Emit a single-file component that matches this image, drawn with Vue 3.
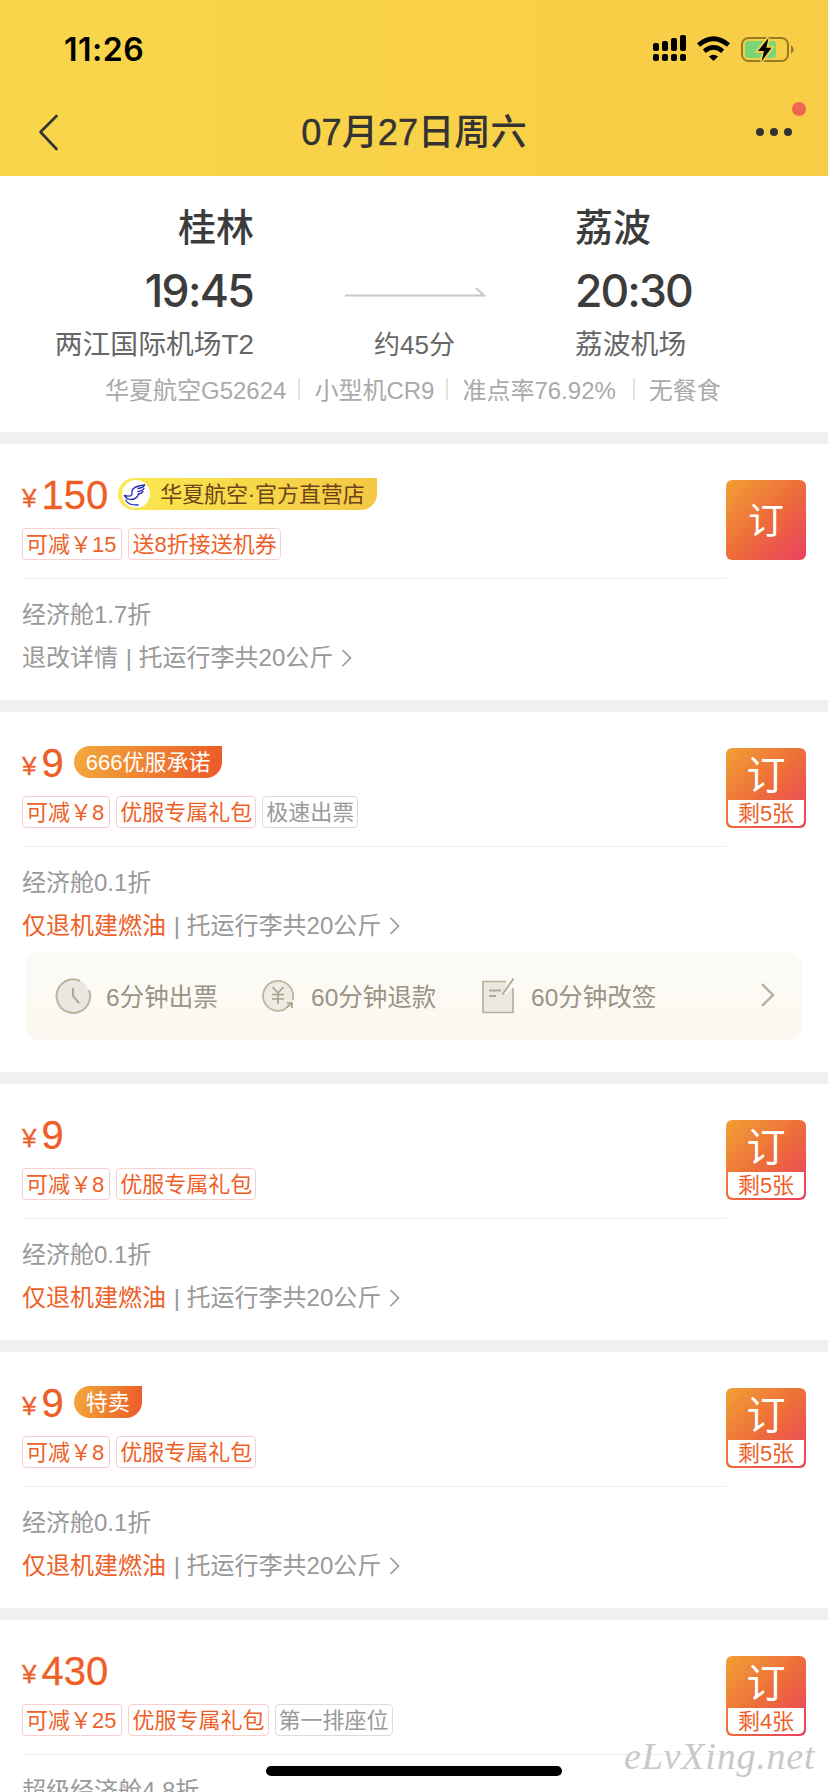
<script setup>
const offers = [
  {
    price: '150', store: '华夏航空·官方直营店',
    tags: [{ t: '可减￥15', cut: true }, { t: '送8折接送机券' }],
    cabin: '经济舱1.7折', rule: '退改详情', left: '',
  },
  {
    price: '9', badge: '666优服承诺',
    tags: [{ t: '可减￥8', cut: true }, { t: '优服专属礼包' }, { t: '极速出票', gray: true }],
    cabin: '经济舱0.1折', rule: '仅退机建燃油', hot: true, left: '剩5张', service: true,
  },
  {
    price: '9',
    tags: [{ t: '可减￥8', cut: true }, { t: '优服专属礼包' }],
    cabin: '经济舱0.1折', rule: '仅退机建燃油', hot: true, left: '剩5张',
  },
  {
    price: '9', badge: '特卖',
    tags: [{ t: '可减￥8', cut: true }, { t: '优服专属礼包' }],
    cabin: '经济舱0.1折', rule: '仅退机建燃油', hot: true, left: '剩5张',
  },
  {
    price: '430',
    tags: [{ t: '可减￥25', cut: true }, { t: '优服专属礼包' }, { t: '第一排座位', gray: true }],
    cabin: '超级经济舱4.8折', rule: '退改详情', left: '剩4张',
  },
]
const info = ['华夏航空G52624', '小型机CR9', '准点率76.92%', '无餐食']
</script>

<template>
  <div class="screen">
    <header class="top">
      <div class="status">
        <span class="clock">11:26</span>
        <svg class="sys" width="144" height="32" viewBox="0 0 144 32">
          <g fill="#000">
            <rect x="3" y="11" width="6" height="8" rx="2" />
            <rect x="12" y="9" width="6" height="10" rx="2" />
            <rect x="21" y="6" width="6" height="13" rx="2" />
            <rect x="30" y="3" width="6" height="16" rx="2" />
            <rect x="3" y="22" width="6" height="7" rx="2" />
            <rect x="12" y="22" width="6" height="7" rx="2" />
            <rect x="21" y="22" width="6" height="7" rx="2" />
            <rect x="30" y="22" width="6" height="7" rx="2" />
            <path d="M63.500 29L58.900 24.600Q63.500 20.800 68.100 24.600Z" />
          </g>
          <g fill="none" stroke="#000" stroke-width="4.600">
            <path d="M48.500 13Q63.500 0.500 78.500 13" />
            <path d="M54.300 19.200Q63.500 11.500 72.700 19.200" />
          </g>
          <rect x="92" y="6" width="46" height="23" rx="6.500" fill="none" stroke="#967a25" stroke-width="2" />
          <path d="M141 13Q146.500 17.500 141 22Z" fill="#967a25" />
          <rect x="95" y="9" width="31" height="17" rx="3" fill="#77d777" />
          <path d="M118.500 6L108 19H114L111.500 29.500L121.500 15.800H116.300Z" fill="#000" stroke="#f8cf48" stroke-width="3.600" paint-order="stroke" />
        </svg>
      </div>
      <nav class="nav">
        <svg class="back" width="24" height="40" viewBox="0 0 24 40">
          <path d="M20.500 4L4.500 20L20.500 37" fill="none" stroke="#333" stroke-width="2.600" stroke-linecap="round" stroke-linejoin="round" />
        </svg>
        <h1><i>07</i>月<i>27</i>日周六</h1>
        <svg class="more" width="56" height="40" viewBox="0 0 56 40">
          <g fill="#333"><circle cx="10" cy="32" r="4" /><circle cx="24" cy="32" r="4" /><circle cx="38" cy="32" r="4" /></g>
          <circle cx="49" cy="9" r="7" fill="#ec6650" />
        </svg>
      </nav>
    </header>

    <section class="flight">
      <div class="route">
        <div class="from">
          <div class="city">桂林</div>
          <div class="time">19:45</div>
          <div class="port">两江国际机场T2</div>
        </div>
        <div class="mid">
          <svg width="142" height="14" viewBox="0 0 142 14">
            <path d="M1 10.500H140L132 3" fill="none" stroke="#c8c8c8" stroke-width="2" />
          </svg>
          <div class="port">约45分</div>
        </div>
        <div class="to">
          <div class="city">荔波</div>
          <div class="time">20:30</div>
          <div class="port">荔波机场</div>
        </div>
      </div>
      <div class="info"><span v-for="i in info" :key="i">{{ i }}</span></div>
    </section>

    <section v-for="(o, n) in offers" :key="n" class="offer">
      <div class="head">
        <div class="deal">
          <div class="line">
            <span class="yen">¥</span><span class="price">{{ o.price }}</span>
            <span v-if="o.store" class="badge store">
              <svg width="28" height="28" viewBox="0 0 28 28">
                <circle cx="14" cy="14" r="14" fill="#fff" />
                <g fill="none" stroke="#2529b4" stroke-width="1.300" stroke-linecap="round" stroke-linejoin="round">
                  <path d="M22.500 5Q13.500 6 11 9Q9.500 11 10 14.500Q9 17 2.500 15.500" />
                  <path d="M2.500 15.500Q4.500 19.500 9.500 19.500Q15 19 16.500 14" />
                  <path d="M22.500 5Q22 7.500 16 8.500M22 8.500Q21 10.500 16 11.500M21 11.500Q19.500 13.500 16.500 14M4 20Q4.500 25 16 25" />
                </g>
              </svg><span>{{ o.store }}</span>
            </span>
            <span v-if="o.badge" class="badge">{{ o.badge }}</span>
          </div>
          <div class="tags">
            <span v-for="t in o.tags" :key="t.t" class="tag" :class="{ gray: t.gray, cut: t.cut }">{{ t.t }}</span>
          </div>
        </div>
        <button class="book" :class="{ few: o.left }">
          <b>订</b><small v-if="o.left">{{ o.left }}</small>
        </button>
      </div>
      <p class="cabin">{{ o.cabin }}</p>
      <p class="rules">
        <span :class="{ hot: o.hot }">{{ o.rule }}</span><span class="bag">&nbsp;|&nbsp;托运行李共20公斤</span>
        <svg width="12" height="20" viewBox="0 0 12 20"><path d="M1.500 2L9.500 10L1.500 18" fill="none" stroke="#999" stroke-width="1.700" /></svg>
      </p>
      <div v-if="o.service" class="service">
        <span>
          <svg width="38" height="38" viewBox="0 0 38 38">
            <circle cx="19" cy="19" r="16.500" fill="#e9e7df" />
            <path d="M26 4Q20 1 13 3.500A16.800 16.800 0 1 0 35 13" fill="none" stroke="#bbb5a1" stroke-width="2" />
            <path d="M19 11V19L25 26" fill="none" stroke="#aaa596" stroke-width="2" />
          </svg>6分钟出票
        </span>
        <span>
          <svg width="38" height="38" viewBox="0 0 38 38">
            <circle cx="19" cy="19" r="15" fill="#eeebe2" />
            <path d="M27 31.500A15 15 0 1 1 34 19V23" fill="none" stroke="#bbb5a1" stroke-width="1.800" />
            <path d="M13.500 10L19 16L24.500 10M19 16V27M13 17.500H25M13 22H25M27 31L33 26M28 26H33V31" fill="none" stroke="#aaa08c" stroke-width="1.700" />
          </svg>60分钟退款
        </span>
        <span>
          <svg width="38" height="38" viewBox="0 0 38 38">
            <path d="M4 5H28L24 17H27L34 11V35H4Z" fill="#ebe8df" />
            <path d="M27 4.500H4V35.500H34V11" fill="none" stroke="#b9b09b" stroke-width="1.700" />
            <path d="M34.500 1.500L23.500 17.500M10 13.500H22M10 19H17" fill="none" stroke="#b3a892" stroke-width="1.900" />
          </svg>60分钟改签
        </span>
        <svg class="go" width="16" height="28" viewBox="0 0 16 28"><path d="M2 3L13 14L2 25" fill="none" stroke="#b4aea0" stroke-width="2.400" /></svg>
      </div>
    </section>

    <div class="home"></div>
    <div class="mark">eLvXing.net</div>
  </div>
</template>

<style>
body { margin: 0; background: #fff; }
</style>

<style scoped>
.screen {
  position: relative; width: 828px; height: 1792px; overflow: hidden; background: #f0f0f0;
  font-family: "Liberation Sans", "Noto Sans CJK SC", sans-serif; color: #999;
}
.top { height: 176px; background: linear-gradient(90deg, #f8d64b, #f8cd46); }
.status { height: 88px; display: flex; justify-content: space-between; padding: 0 34px 0 64px; }
.clock { font: 600 32px/40px Inter, sans-serif; color: #000; margin-top: 30px; letter-spacing: .5px; }
.sys { margin-top: 32px; }
.nav { height: 88px; display: grid; grid-template-columns: 78px 1fr 78px; }
.back { margin: 24px 0 0 36px; }
.more { margin: 12px 0 0; }
h1 { margin: 22px 0 0; text-align: center; font-size: 36.2px; line-height: 45px; font-weight: 500; color: #333; }
h1 i { font-style: normal; -webkit-text-stroke: .4px #333; }
.flight { height: 256px; background: #fff; box-sizing: border-box; padding-top: 28px; }
.route { display: grid; grid-template-columns: 254px 321px 1fr; }
.from { text-align: right; }
.mid { text-align: center; padding-top: 81px; }
.mid svg { display: block; margin: 0 auto 28px; }
.city { font-size: 38px; line-height: 49px; height: 48px; font-weight: 500; color: #3c3c3c; }
.time { font: 500 44.5px/52px Inter, sans-serif; color: #3c3c3c; margin-top: 13px; letter-spacing: -1.900px; }
.from .time { padding-right: 1px; letter-spacing: -1.700px; }
.port { font-size: 27.800px; line-height: 36px; color: #666; margin-top: 10px; }
.mid .port { margin-top: 0; font-size: 26px; }
.info { display: flex; padding-left: 105px; height: 32px; margin-top: 12px; font-size: 24px; line-height: 32px; color: #aaa; }
.info span { display: flex; align-items: center; }
.info span + span::before { content: ""; width: 2px; height: 22px; background: #e2e2e2; margin: -4px 14px 0 12px; }
.info span:last-child::before { margin-left: 17px; }
.offer { background: #fff; margin-top: 12px; padding: 34px 22px 26px; }
.head { display: flex; justify-content: space-between; height: 101px; }
.deal { flex: 1; border-bottom: 1px solid #eee; }
.line { display: flex; height: 32px; color: #ee5f28; }
.yen { width: 19.5px; font-size: 26px; line-height: 40px; -webkit-text-stroke: .3px #ee5f28; }
.price { font-size: 40px; line-height: 34px; -webkit-text-stroke: .3px #ee5f28; }
.badge {
  margin-left: 10px; height: 32px; box-sizing: border-box; padding: 0 12px; font-size: 22px; line-height: 33px; color: #fff;
  border-radius: 16px 0 16px 16px; background: linear-gradient(100deg, #f2a93c, #ec5a28);
}
.store { display: flex; align-items: center; padding: 0 12px 0 4px; color: #6b431b; background: linear-gradient(100deg, #fbe94f, #f5c744); }
.store svg { margin-right: 10px; }
.store span { letter-spacing: -.1px; }
.tags { display: flex; gap: 6px; margin-top: 18px; }
.tag { height: 32px; box-sizing: border-box; border: 1px solid #f8cfcf; border-radius: 4px; padding: 0 3px; font-size: 22px; line-height: 31px; color: #ee5f28; }
.tag.cut { padding: 0 5px 0 3px; }
.tag.gray { color: #999; border-color: #dcdcdc; }
.book { width: 80px; height: 80px; margin: 2px 0 0; padding: 0; border: 0; border-radius: 6px; background: linear-gradient(135deg, #f2a035, #ed6d3a 50%, #eb3f60); font-family: inherit; color: #fff; display: flex; flex-direction: column; align-items: center; justify-content: center; }
.book b { font-weight: 400; font-size: 36px; height: 80px; line-height: 83px; }
.few { justify-content: flex-start; }
.few b { font-size: 39px; line-height: 55px; height: 52px; }
.book small { width: 76px; height: 26px; background: #fff; border-radius: 0 0 5px 5px; color: #ee5f28; font-size: 22px; line-height: 27px; }
.cabin, .rules { margin: 0; font-size: 24px; line-height: 32px; }
.cabin { margin-top: 20px; }
.rules { display: flex; align-items: center; margin-top: 11px; white-space: pre; }
.bag { margin-left: 1px; }
.rules svg { margin-left: 8px; }
.hot { color: #ee5f28; }
.service {
  margin: 10px 4px 6px; height: 88px; border-radius: 14px; display: grid; grid-template-columns: 205px 220px 1fr 16px; align-items: center;
  box-sizing: border-box; padding: 0 26px 2px 28px; font-size: 24.5px; color: #999385; background: linear-gradient(#fbfbf5, #fcf8f1);
}
.service span { display: flex; align-items: center; }
.service span svg { margin: 2px 14px 0 0; }
.home { position: absolute; left: 266px; top: 1766px; width: 296px; height: 10px; border-radius: 5px; background: #000; }
.mark { position: absolute; left: 624px; top: 1732px; font: italic 38px/48px "Liberation Serif", serif; letter-spacing: .8px; color: #c9c9c9; }
</style>
